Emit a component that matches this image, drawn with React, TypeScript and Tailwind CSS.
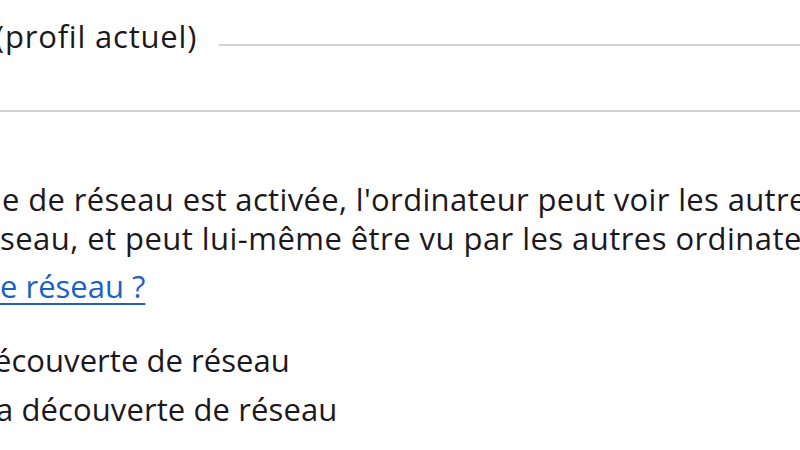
import React from "react";

export default function App() {
  const font = { fontFamily: '"Open Sans", "Noto Sans", sans-serif' };
  return (
    <div
      className="w-[800px] h-[450px] bg-white overflow-hidden text-[31px] font-medium text-[#1c1820] whitespace-nowrap"
      style={font}
    >
      <div className="flex pt-[16px] h-[56px]">
        <div className="leading-[40px] h-[40px] ml-[-5px] tracking-[0.8px]">(profil actuel)</div>
        <div className="flex-1 h-[2px] bg-[#d2d2d2] mt-[28px] ml-[22px]" />
      </div>
      <div className="h-[2px] bg-[#d2d2d2] mt-[54px]" />
      <div className="mt-[67px] leading-[40px] h-[40px] ml-[2px] tracking-[0.35px]">
        e de réseau est activée, l'ordinateur peut voir les autres ordinateurs
      </div>
      <div className="mt-[-1px] leading-[40px] h-[40px] ml-[0px] tracking-[0.45px]">
        seau, et peut lui-même être vu par les autres ordinateurs du réseau.
      </div>
      <div className="mt-[8px] leading-[40px] h-[40px]">
        <a className="text-[#1b62c4] underline decoration-2 underline-offset-[5px]">
          e réseau ?
        </a>
      </div>
      <div className="mt-[34px] leading-[40px] h-[40px] ml-[-6px] tracking-[0.05px]">
        écouverte de réseau
      </div>
      <div className="mt-[9px] leading-[40px] h-[40px] ml-[-4px] tracking-[0.1px]">
        a découverte de réseau
      </div>
    </div>
  );
}
